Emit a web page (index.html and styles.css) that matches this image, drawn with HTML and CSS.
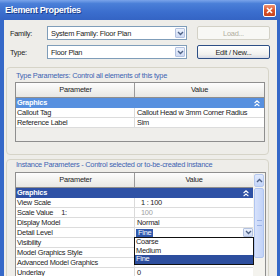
FILE: index.html
```html
<!DOCTYPE html>
<html lang="en">
<head>
    <meta charset="UTF-8">
    <title>Element Properties</title>
    <link rel="stylesheet" href="styles.css">
</head>
<body>

<div class="window">
    <div class="titlebar">
        <span class="title">Element Properties</span>
        <span class="close-btn">
            <svg width="7" height="7" viewBox="0 0 7 7"><path d="M1 1L6 6M6 1L1 6" stroke="#fff" stroke-width="1.6"/></svg>
        </span>
    </div>

    <div class="dialog">
        <div class="field-row">
            <span class="field-label">Family:</span>
            <div class="combo">
                <span>System Family: Floor Plan</span>
                <span class="combo-arrow"><svg width="7" height="5" viewBox="0 0 7 5"><path d="M1 1L3.5 3.5L6 1" fill="none" stroke="#4d6185" stroke-width="1.4"/></svg></span>
            </div>
            <button class="btn" disabled>Load...</button>
        </div>
        <div class="field-row">
            <span class="field-label">Type:</span>
            <div class="combo">
                <span>Floor Plan</span>
                <span class="combo-arrow"><svg width="7" height="5" viewBox="0 0 7 5"><path d="M1 1L3.5 3.5L6 1" fill="none" stroke="#4d6185" stroke-width="1.4"/></svg></span>
            </div>
            <button class="btn">Edit / New...</button>
        </div>

        <div class="group group-type">
            <div class="group-label">Type Parameters: Control all elements of this type</div>
            <div class="grid grid-type">
                <div class="grid-head">
                    <div class="col-param">Parameter</div>
                    <div class="col-value">Value</div>
                </div>
                <div class="grid-section section-light">
                    <span>Graphics</span>
                    <svg class="collapse" width="6" height="7" viewBox="0 0 6 7"><path d="M0.6 3L3 0.8L5.4 3M0.6 6.2L3 4L5.4 6.2" fill="none" stroke="#fff" stroke-width="1.1"/></svg>
                </div>
                <div class="grid-row">
                    <div class="col-param">Callout Tag</div>
                    <div class="col-value">Callout Head w 3mm Corner Radius</div>
                </div>
                <div class="grid-row">
                    <div class="col-param">Reference Label</div>
                    <div class="col-value">Sim</div>
                </div>
            </div>
        </div>

        <div class="group group-inst">
            <div class="group-label">Instance Parameters - Control selected or to-be-created instance</div>
            <div class="grid grid-inst">
                <div class="grid-body">
                    <div class="grid-head">
                        <div class="col-param">Parameter</div>
                        <div class="col-value">Value</div>
                    </div>
                    <div class="grid-section">
                        <span>Graphics</span>
                        <svg class="collapse" width="6" height="7" viewBox="0 0 6 7"><path d="M0.6 3L3 0.8L5.4 3M0.6 6.2L3 4L5.4 6.2" fill="none" stroke="#fff" stroke-width="1.1"/></svg>
                    </div>
                    <div class="grid-row">
                        <div class="col-param">View Scale</div>
                        <div class="col-value indent">1 : 100</div>
                    </div>
                    <div class="grid-row">
                        <div class="col-param">Scale Value<span class="scale-prefix">1:</span></div>
                        <div class="col-value indent muted">100</div>
                    </div>
                    <div class="grid-row">
                        <div class="col-param">Display Model</div>
                        <div class="col-value">Normal</div>
                    </div>
                    <div class="grid-row">
                        <div class="col-param">Detail Level</div>
                        <div class="col-value select">
                            <span class="select-text">Fine</span>
                            <span class="select-arrow"><svg width="7" height="5" viewBox="0 0 7 5"><path d="M1 1L3.5 3.5L6 1" fill="none" stroke="#4d6185" stroke-width="1.4"/></svg></span>
                            <div class="dropdown">
                                <div>Coarse</div>
                                <div>Medium</div>
                                <div class="active">Fine</div>
                            </div>
                        </div>
                    </div>
                    <div class="grid-row">
                        <div class="col-param">Visibility</div>
                        <div class="col-value"></div>
                    </div>
                    <div class="grid-row">
                        <div class="col-param">Model Graphics Style</div>
                        <div class="col-value"></div>
                    </div>
                    <div class="grid-row">
                        <div class="col-param">Advanced Model Graphics</div>
                        <div class="col-value"></div>
                    </div>
                    <div class="grid-row">
                        <div class="col-param">Underlay</div>
                        <div class="col-value">0</div>
                    </div>
                </div>
                <div class="scrollbar">
                    <div class="sb-up"><svg width="7" height="5" viewBox="0 0 7 5"><path d="M1 4L3.5 1.5L6 4" fill="none" stroke="#4d6185" stroke-width="1.4"/></svg></div>
                    <div class="sb-thumb"><span class="grip"></span></div>
                </div>
            </div>
        </div>
    </div>
</div>

</body>
</html>
```

FILE: styles.css
```css
html, body {
    margin: 0;
    padding: 0;
}
body {
    width: 280px;
    height: 276px;
    overflow: hidden;
    font-family: "Liberation Sans", Arial, sans-serif;
    font-size: 7.4px;
    letter-spacing: -0.25px;
    color: #1c1c1c;
    background: #3568c8;
}
.window {
    width: 280px;
    height: 276px;
    display: flex;
    flex-direction: column;
    background: #3568c8;
}
.titlebar {
    height: 20px;
    flex: none;
    display: flex;
    align-items: center;
    justify-content: space-between;
    padding: 0 4px 0 5px;
    background: linear-gradient(#7aa4ea 0%, #4a7fd8 18%, #3b6ece 60%, #3464c4 100%);
}
.title {
    color: #fff;
    font-weight: bold;
    font-size: 9px;
    letter-spacing: -0.35px;
    text-shadow: 1px 1px 0 #1d3f8c;
}
.close-btn {
    width: 13px;
    height: 13px;
    box-sizing: border-box;
    border: 1px solid #fff;
    border-radius: 2px;
    background: linear-gradient(#ee9272, #da552c 50%, #c8441f);
    display: flex;
    align-items: center;
    justify-content: center;
}
.dialog {
    flex: 1;
    margin: 0 3px 0 4px;
    padding-top: 6px;
    background: #eeede9;
    overflow: hidden;
}

/* top fields */
.field-row {
    display: flex;
    align-items: center;
    height: 14px;
    padding-left: 6px;
    margin-bottom: 5px;
}
.field-label {
    width: 37px;
}
.combo {
    width: 140px;
    height: 14px;
    box-sizing: border-box;
    border: 1px solid #7f9db9;
    background: #fff;
    display: flex;
    align-items: center;
    justify-content: space-between;
    padding-left: 3px;
}
.combo-arrow, .select-arrow {
    width: 10px;
    height: 10px;
    box-sizing: border-box;
    margin-right: 1px;
    border: 1px solid #b3c2e0;
    border-radius: 1px;
    background: linear-gradient(#eef3fd, #cdd9f3);
    display: flex;
    align-items: center;
    justify-content: center;
}
.btn {
    margin-left: 10px;
    width: 73px;
    height: 14px;
    padding: 0;
    font: inherit;
    letter-spacing: inherit;
    color: #1c1c1c;
    border: 1px solid #2d4f86;
    border-radius: 2px;
    background: linear-gradient(#ffffff, #f1f1ee 70%, #d8dbe6);
}
.btn:disabled {
    color: #b1ae9f;
    border-color: #d3d1c6;
    background: #f8f8f5;
}

/* group boxes */
.group {
    margin: 0 8px 0 2px;
    border: 1px solid #d6d4c8;
    border-radius: 4px;
}
.group-type {
    margin-top: 8px;
    padding: 4px 3px 12px 8px;
}
.group-inst {
    margin-top: 4px;
    padding: 1px 2px 0 8px;
    height: 140px;
}
.group-label {
    height: 8px;
    line-height: 8px;
    padding-left: 1px;
    margin-bottom: 2px;
    color: #3d63b2;
    white-space: nowrap;
}
.group-inst .group-label {
    margin-bottom: 3px;
}

/* property grids */
.grid {
    border: 1px solid #8e8e8e;
    background: #efeeeb;
}
.grid-type {
    height: 58px;
}
.grid-inst {
    display: flex;
    height: 130px;
    background: #fff;
}
.grid-body {
    flex: 1;
}
.grid-head {
    display: flex;
    height: 15px;
    box-sizing: border-box;
    line-height: 13px;
    text-align: center;
    border-bottom: 1px solid #8e8e8e;
    background: linear-gradient(#fdfdfd, #e8e7e3);
}
.grid-head .col-param {
    border-right-color: #9a9a9a;
}
.col-param {
    width: 119px;
    flex: none;
    box-sizing: border-box;
    padding-left: 1px;
    border-right: 1px solid #dadada;
    white-space: nowrap;
}
.col-value {
    flex: 1;
    padding-left: 2px;
    white-space: nowrap;
    overflow: visible;
}
.grid-head .col-value {
    padding-left: 0;
}
.grid-row {
    display: flex;
    height: 10px;
    box-sizing: border-box;
    line-height: 9px;
    border-bottom: 1px solid #dcdcdc;
    background: #fff;
}
.grid-section {
    display: flex;
    align-items: center;
    justify-content: space-between;
    height: 10px;
    line-height: 10px;
    padding-left: 1px;
    background: #2e51a5;
    color: #fff;
    font-weight: bold;
}
.section-light {
    background: #5790df;
}
.collapse {
    margin-right: 4px;
}
.indent {
    padding-left: 6px;
}
.muted {
    color: #a0a0a0;
}
.scale-prefix {
    margin-left: 8px;
}

/* detail level picker */
.select {
    position: relative;
    display: flex;
    align-items: center;
    justify-content: space-between;
    padding-left: 1px;
}
.select-text {
    line-height: 8px;
    padding: 0 2px;
    background: #3159ad;
    color: #fff;
}
.select-arrow {
    height: 9px;
    margin-right: 0;
}
.dropdown {
    position: absolute;
    left: -1px;
    top: 9px;
    width: 118px;
    border: 1px solid #111;
    background: #fff;
    z-index: 2;
}
.dropdown div {
    height: 8.5px;
    line-height: 8.5px;
    padding-left: 1px;
}
.dropdown .active {
    background: #2d4e9e;
    color: #fff;
}

/* scrollbar */
.scrollbar {
    width: 12px;
    flex: none;
    background: #f4f3ee;
    display: flex;
    flex-direction: column;
    align-items: center;
}
.sb-up {
    width: 10px;
    height: 13px;
    margin-top: 1px;
    box-sizing: border-box;
    border: 1px solid #b6c9ef;
    border-radius: 2px;
    background: linear-gradient(#e1eafd, #c3d4f8);
    display: flex;
    align-items: center;
    justify-content: center;
}
.sb-thumb {
    width: 10px;
    height: 70px;
    margin-top: 1px;
    box-sizing: border-box;
    border: 1px solid #b0c5f0;
    border-radius: 2px;
    background: linear-gradient(to right, #d6e1fb, #c2d3f8);
    display: flex;
    align-items: center;
    justify-content: center;
}
.grip {
    width: 5px;
    height: 4px;
    border-top: 1px solid #9bb2e4;
    border-bottom: 1px solid #9bb2e4;
}
```
